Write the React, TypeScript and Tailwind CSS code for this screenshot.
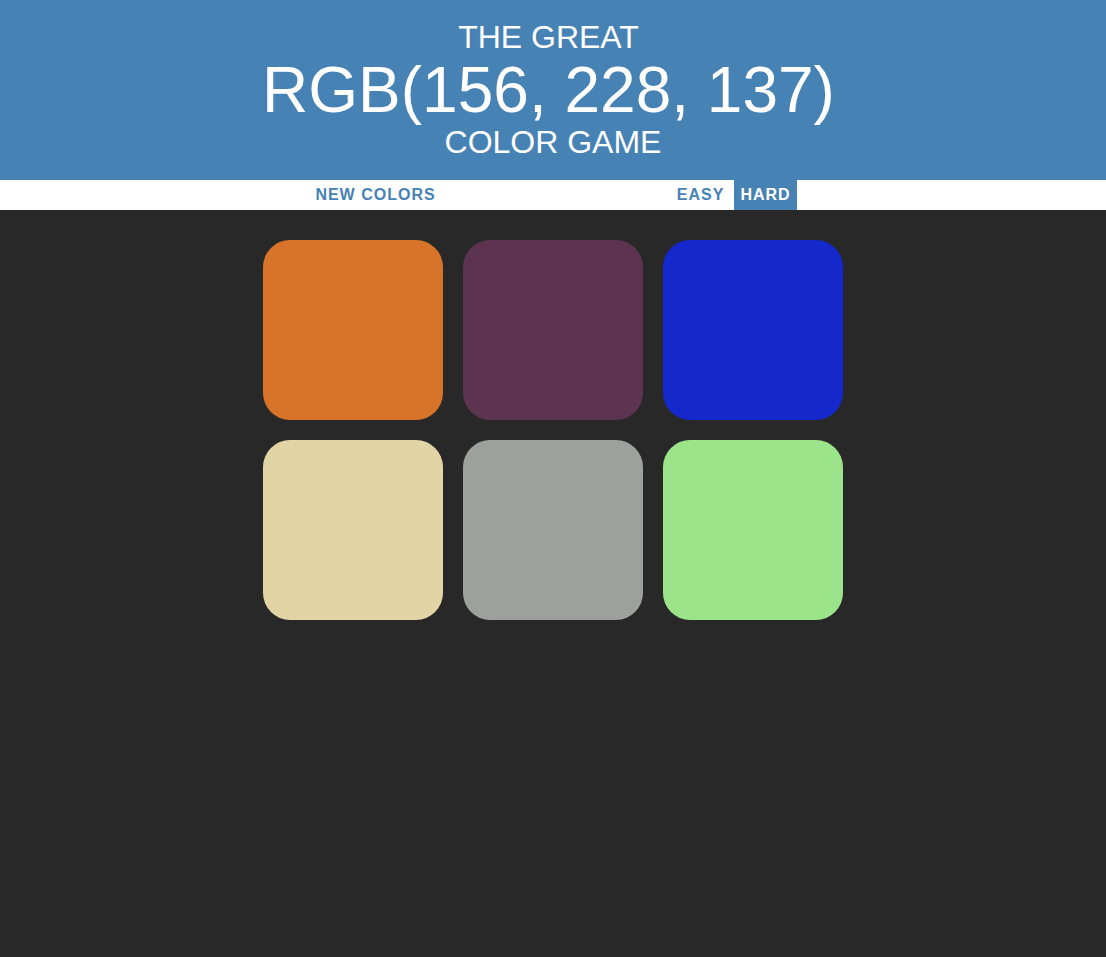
import React, { useState } from "react";

const squares = [
  "rgb(216, 116, 41)",
  "rgb(92, 52, 80)",
  "rgb(20, 40, 204)",
  "rgb(227, 212, 166)",
  "rgb(156, 161, 157)",
  "rgb(156, 228, 137)",
];

export default function App() {
  const [hard, setHard] = useState(true);

  return (
    <div className="min-h-screen bg-[#282828] font-['Liberation_Sans',Arial,sans-serif]">
      {/* header */}
      <h1 className="h-[180px] bg-[#4682b4] py-5 text-center font-normal uppercase text-white">
        <div className="pr-[9px] text-[32px] leading-[35px]">The Great</div>
        <div className="pr-[9px] text-[64px] leading-[70px]">RGB(156, 228, 137)</div>
        <div className="text-[32px] leading-[35px]">Color Game</div>
      </h1>

      {/* stripe */}
      <div className="flex h-[30px] justify-center gap-[4px] bg-white text-base">
        <button className="px-[6px] font-bold uppercase tracking-[1px] text-[#4682b4]">New Colors</button>
        <span className="w-[20%]" />
        <button
          onClick={() => setHard(false)}
          className={`px-[6px] font-bold uppercase tracking-[1px] ${hard ? "text-[#4682b4]" : "bg-[#4682b4] text-white"}`}
        >
          Easy
        </button>
        <button
          onClick={() => setHard(true)}
          className={`px-[6px] font-bold uppercase tracking-[1px] ${hard ? "bg-[#4682b4] text-white" : "text-[#4682b4]"}`}
        >
          Hard
        </button>
      </div>

      {/* squares */}
      <div className="mx-auto mt-[30px] grid w-[600px] grid-cols-3 gap-5 px-[10px]">
        {squares.map((c, i) => (
          <div key={i} className="h-[180px] w-[180px] rounded-[27px]" style={{ background: c }} />
        ))}
      </div>
    </div>
  );
}
